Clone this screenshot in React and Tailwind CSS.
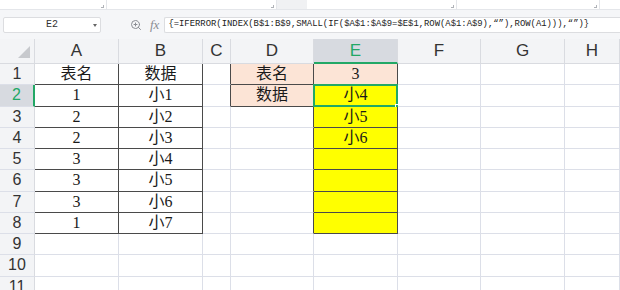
import React from 'react';
import { ZoomIn } from 'lucide-react';

const COLS = ['A', 'B', 'C', 'D', 'E', 'F', 'G', 'H'];

const DATA = {
    1: { A: '表名', B: '数据', D: '表名', E: '3' },
    2: { A: '1', B: '小1', D: '数据', E: '小4' },
    3: { A: '2', B: '小2', E: '小5' },
    4: { A: '2', B: '小3', E: '小6' },
    5: { A: '3', B: '小4' },
    6: { A: '3', B: '小5' },
    7: { A: '3', B: '小6' },
    8: { A: '1', B: '小7' },
};

const FORMULA = '{=IFERROR(INDEX(B$1:B$9,SMALL(IF($A$1:$A$9=$E$1,ROW(A$1:A$9),“”),ROW(A1))),“”)}';

const darkRight = (r, c) =>
    r <= 8 && (c === 'A' || c === 'B' || c === 'D' || c === 'E') || (r <= 2 && c === 'C');

const darkBottom = (r, c) =>
    r <= 8 && (c === 'A' || c === 'B' || c === 'E') || (r <= 2 && c === 'D');

const fillOf = (r, c) => {
    if ((c === 'D' && r <= 2) || (c === 'E' && r === 1)) return 'bg-[#fce4d6]';
    if (c === 'E' && r >= 2 && r <= 8) return 'bg-[#ffff00]';
    return 'bg-white';
};

const Cell = ({ r, c }) => {
    const text = DATA[r]?.[c];
    const selected = r === 2 && c === 'E';
    return (
        <div
            className={[
                'relative h-[21.25px] flex items-center justify-center border-r border-b text-[16px] leading-none text-[#1a1a1a]',
                "font-['Liberation_Serif','Noto_Sans_CJK_SC',serif]",
                darkRight(r, c) ? 'border-r-[#4a4a4a]' : 'border-r-[#dcdfe8]',
                darkBottom(r, c) ? 'border-b-[#4a4a4a]' : 'border-b-[#dcdfe8]',
                fillOf(r, c),
            ].join(' ')}
        >
            {text}
            {selected && (
                <div className="absolute -left-[1px] -top-[1px] -right-[1px] -bottom-[1px] border-2 border-[#22a866]">
                    <div className="absolute -right-[4px] -bottom-[4px] w-[5px] h-[5px] bg-[#22a866] border border-white"></div>
                </div>
            )}
        </div>
    );
};

const App = () => {
    return (
        <div className="w-[620px] h-[290px] overflow-hidden bg-white font-['Liberation_Sans',Arial,sans-serif]">

            {/* toolbar remnant */}
            <div className="h-[10px] flex border-b border-[#e4e6ea] bg-white">
                <div className="relative w-[107px] border-r border-[#e4e6ea]">
                    <span className="absolute right-[2px] bottom-[1px] w-[3px] h-[3px] border-r border-b border-[#b0b3b8]"></span>
                </div>
                <div className="relative w-[170px] border-r border-[#e4e6ea]">
                    <span className="absolute right-[2px] bottom-[1px] w-[3px] h-[3px] border-r border-b border-[#b0b3b8]"></span>
                </div>
                <div className="w-[30px] bg-[#f0f1f3]"></div>
                <div className="relative w-[150px] border-r border-[#e4e6ea]">
                    <span className="absolute right-[2px] bottom-[1px] w-[3px] h-[3px] border-r border-b border-[#b0b3b8]"></span>
                </div>
                <div className="relative w-[143px] border-r border-[#e4e6ea]">
                    <span className="absolute right-[2px] bottom-[1px] w-[3px] h-[3px] border-r border-b border-[#b0b3b8]"></span>
                </div>
                <div className="flex-1"></div>
            </div>

            {/* formula bar */}
            <div className="h-[29px] flex items-center bg-[#f5f6f8]">
                <div className="ml-[3px] w-[98px] h-[16px] relative flex items-center justify-center bg-white border border-[#dcdde0] rounded-[2px]">
                    <span className="font-['Liberation_Mono',monospace] text-[10px] text-[#333]">E2</span>
                    <span className="absolute right-[3px] top-[6px] w-0 h-0 border-l-[2px] border-r-[2px] border-t-[3px] border-l-transparent border-r-transparent border-t-[#666]"></span>
                </div>
                <ZoomIn className="ml-[29px] w-[12px] h-[12px] text-[#8a8d93]" strokeWidth={2} />
                <span className="ml-[8px] font-['Liberation_Serif',serif] italic text-[13px] text-[#8a8d93] leading-none">fx</span>
                <div className="ml-[5px] flex-1 h-[16px] flex items-center pl-[3px] bg-white border border-[#dcdde0] border-r-0 rounded-l-[2px]">
                    <span className="font-['Liberation_Mono',monospace] text-[8.9px] text-[#222] whitespace-nowrap">{FORMULA}</span>
                </div>
            </div>

            {/* sheet */}
            <div className="grid grid-cols-[35px_84px_84px_28px_83px_84px_83px_84px_1fr]">
                {/* header row */}
                <div className="relative h-[25px] bg-[#f3f4f6] border-r border-b border-[#d9dbe0]">
                    <svg className="absolute left-0 top-0" width="35" height="25" viewBox="0 0 35 25">
                        <polygon points="18,19 30,19 30,7" fill="#c7c9cd" />
                    </svg>
                </div>
                {COLS.map((c) =>
                    c === 'E' ? (
                        <div key={c} className="h-[25px] flex items-center justify-center bg-[#d7dae0] border-r border-r-[#d9dbe0] border-b-2 border-b-[#22a866] text-[17px] text-[#22a866]">
                            {c}
                        </div>
                    ) : (
                        <div key={c} className="h-[25px] flex items-center justify-center bg-[#f3f4f6] border-r border-b border-[#d9dbe0] text-[17px] text-[#333]">
                            {c}
                        </div>
                    )
                )}

                {/* data rows */}
                {Array.from({ length: 11 }, (_, i) => i + 1).map((r) => (
                    <React.Fragment key={r}>
                        {r === 2 ? (
                            <div className="h-[21.25px] flex items-center justify-center bg-[#d7dae0] border-r-2 border-r-[#22a866] border-b border-b-[#dcdfe8] text-[16px] text-[#22a866]">
                                {r}
                            </div>
                        ) : (
                            <div className="h-[21.25px] flex items-center justify-center bg-[#f3f4f6] border-r border-b border-r-[#d9dbe0] border-b-[#dcdfe8] text-[16px] text-[#333]">
                                {r}
                            </div>
                        )}
                        {COLS.map((c) => (
                            <Cell key={c} r={r} c={c} />
                        ))}
                    </React.Fragment>
                ))}
            </div>
        </div>
    );
};

export default App;
